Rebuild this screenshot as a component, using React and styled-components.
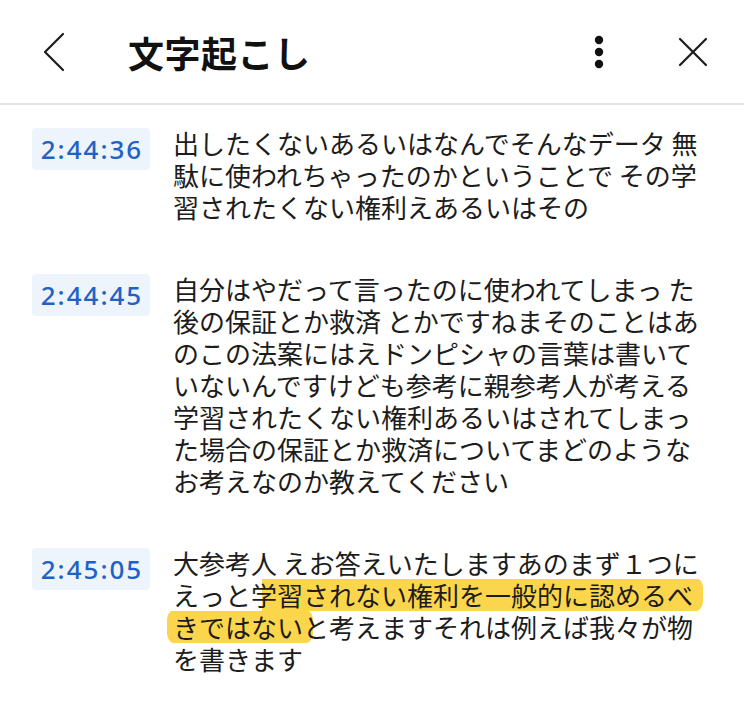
import React from "react";
import styled, { createGlobalStyle } from "styled-components";

// each line is a string, or a list of [text, mark] parts
// mark: "" none, "half" marker begins mid glyph, "start" marker begins here, "on" continues
const entries = [
  {
    time: "2:44:36",
    lines: [
      "出したくないあるいはなんでそんなデータ 無",
      "駄に使われちゃったのかということで その学",
      "習されたくない権利えあるいはその",
    ],
  },
  {
    time: "2:44:45",
    lines: [
      "自分はやだって言ったのに使われてしまっ た",
      "後の保証とか救済 とかですねまそのことはあ",
      "のこの法案にはえドンピシャの言葉は書いて",
      "いないんですけども参考に親参考人が考える",
      "学習されたくない権利あるいはされてしまっ",
      "た場合の保証とか救済についてまどのような",
      "お考えなのか教えてください",
    ],
  },
  {
    time: "2:45:05",
    lines: [
      "大参考人 えお答えいたしますあのまず１つに",
      [
        ["えっと", ""],
        ["学", "half"],
        ["習されない権利を一般的に認めるべ", "on"],
      ],
      [
        ["きではない", "start"],
        ["と考えますそれは例えば我々が物", ""],
      ],
      "を書きます",
    ],
  },
];

const renderLine = (line) => {
  if (typeof line === "string") return line;
  return line.map(([text, mark], i) => {
    if (mark === "half") return <HalfMarker key={i}>{text}</HalfMarker>;
    if (mark) return <Marker key={i} $start={mark === "start"}>{text}</Marker>;
    return <React.Fragment key={i}>{text}</React.Fragment>;
  });
};

const App = () => {
  return (
    <>
      <GlobalStyle />
      <Screen>
        <Header>
          <IconButton aria-label="戻る">
            <svg width="24" height="40" viewBox="0 0 24 40">
              <path
                d="M20 2 L2 20 L20 38"
                fill="none"
                stroke="#1b1b1b"
                strokeWidth="2.2"
                strokeLinecap="round"
                strokeLinejoin="round"
              />
            </svg>
          </IconButton>
          <Title>文字起こし</Title>
          <Spacer />
          <IconButton aria-label="メニュー">
            <svg width="10" height="34" viewBox="0 0 10 34">
              <circle cx="5" cy="5" r="4.2" fill="#111" />
              <circle cx="5" cy="17" r="4.2" fill="#111" />
              <circle cx="5" cy="29" r="4.2" fill="#111" />
            </svg>
          </IconButton>
          <CloseButton aria-label="閉じる">
            <svg width="30" height="30" viewBox="0 0 30 30">
              <path
                d="M2 2 L28 28 M28 2 L2 28"
                fill="none"
                stroke="#1b1b1b"
                strokeWidth="2.2"
                strokeLinecap="round"
              />
            </svg>
          </CloseButton>
        </Header>

        <List>
          {entries.map((entry) => (
            <Entry key={entry.time}>
              <Stamp>{entry.time}</Stamp>
              <Text>
                {entry.lines.map((line, i) => (
                  <Line key={i}>{renderLine(line)}</Line>
                ))}
              </Text>
            </Entry>
          ))}
        </List>
      </Screen>
    </>
  );
};

//styled components
const marker = "rgba(251, 206, 44, 0.85)";

const GlobalStyle = createGlobalStyle`
  * { box-sizing: border-box; }
  body {
    margin: 0;
    background: #ffffff;
    font-family: "Noto Sans CJK JP", "Noto Sans", sans-serif;
    color: #1a1a1a;
  }
`;

const Screen = styled.div`
  width: 744px;
  min-height: 723px;
  background: #fff;
`;

const Header = styled.header`
  height: 105px;
  display: flex;
  align-items: center;
  padding: 0 36px 0 43px;
  border-bottom: 2px solid #e4e4e4;
`;

const IconButton = styled.div`
  display: flex;
  align-items: center;
  justify-content: center;
  svg {
    display: block;
  }
`;

const CloseButton = styled(IconButton)`
  margin-left: 74px;
`;

const Title = styled.h1`
  margin: 0 0 0 61px;
  font-size: 36px;
  font-weight: 700;
  color: #111;
  letter-spacing: 0.5px;
  line-height: 1;
`;

const Spacer = styled.div`
  flex: 1;
`;

const List = styled.main`
  display: flex;
  flex-direction: column;
  gap: 50px;
  padding: 22px 0 0 32px;
`;

const Entry = styled.section`
  display: flex;
  align-items: flex-start;
  gap: 23px;
`;

const Stamp = styled.div`
  flex: none;
  width: 118px;
  height: 42px;
  display: flex;
  align-items: center;
  justify-content: center;
  background: #eef4fb;
  border-radius: 4px;
  color: #1f62c6;
  font-family: "Noto Sans", "Liberation Sans", sans-serif;
  font-size: 26px;
  font-weight: 500;
  letter-spacing: 2px;
  line-height: 1;
  padding-left: 2px;
  margin-top: 1px;
`;

const Text = styled.div`
  font-size: 26px;
  line-height: 32px;
  color: #1c1c1c;
`;

const Line = styled.div`
  white-space: nowrap;
`;

const Marker = styled.span`
  background: linear-gradient(
    transparent 8%,
    ${marker} 8%,
    ${marker} 94%,
    transparent 94%
  );
  border-radius: ${(p) => (p.$start ? "12px" : "0 12px 12px 0")};
  padding: 0 10px 0 ${(p) => (p.$start ? "6px" : "0")};
  margin: 0 -10px 0 ${(p) => (p.$start ? "-6px" : "0")};
`;

const HalfMarker = styled.span`
  background:
    linear-gradient(to right, #fff 42%, transparent 42%),
    linear-gradient(transparent 8%, ${marker} 8%, ${marker} 94%, transparent 94%);
`;

export default App;
